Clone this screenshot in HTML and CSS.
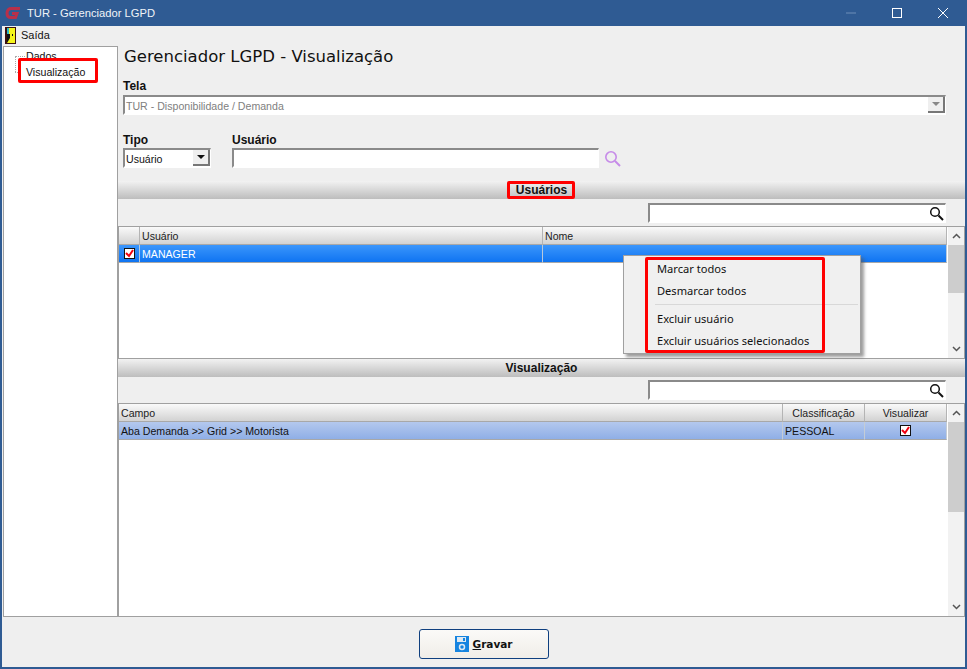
FILE: index.html
```html
<!DOCTYPE html>
<html lang="pt-BR">
<head>
<meta charset="utf-8">
<title>TUR - Gerenciador LGPD</title>
<link rel="stylesheet" href="styles.css">
</head>
<body>
<div class="window">
  <header class="titlebar">
    <svg class="app-logo" viewBox="0 0 16 16" width="16" height="16"><path d="M15 3.500H6.500Q2.500 3.500 2 8q0 4.500 4 4.500h4.500L12 8.500H7" fill="none" stroke="#b8304a" stroke-width="3"/></svg>
    <span class="title">TUR - Gerenciador LGPD</span>
    <div class="win-controls">
      <span class="ctl"><svg viewBox="0 0 12 12" width="12" height="12"><path d="M1 6h10" stroke="#6f8fb8" stroke-width="1"/></svg></span>
      <span class="ctl"><svg viewBox="0 0 12 12" width="12" height="12"><rect x="1.500" y="1.500" width="9" height="9" fill="none" stroke="#fff"/></svg></span>
      <span class="ctl"><svg viewBox="0 0 12 12" width="12" height="12"><path d="M1 1l10 10M11 1L1 11" stroke="#fff" stroke-width="1"/></svg></span>
    </div>
  </header>
  <nav class="menubar">
    <svg class="door" viewBox="0 0 11 17" width="11" height="17"><rect width="11" height="17" fill="#3a1010"/><rect x="2" y="1" width="8" height="15" fill="#f5f51a"/><path d="M2 7h3v4l-3 5z" fill="#111"/><rect x="2" y="1" width="2" height="6" fill="#29b6c9"/><rect x="7" y="7" width="1" height="2" fill="#111"/></svg>
    <span>Saída</span>
  </nav>
  <div class="content">
    <aside class="tree">
      <div class="tree-item first">Dados</div>
      <div class="mark mark-tree"></div>
      <div class="tree-item second">Visualização</div>
    </aside>
    <main class="main">
      <h1 class="heading">Gerenciador LGPD - Visualização</h1>
      <div class="form">
        <label class="lbl tela-lbl">Tela</label>
        <div class="field tela-field">
          <span class="val disabled">TUR - Disponibilidade / Demanda</span>
          <span class="drop off"><i></i></span>
        </div>
        <div class="filter-row">
          <div class="tipo">
            <label class="lbl">Tipo</label>
            <div class="field">
              <span class="val">Usuário</span>
              <span class="drop"><i></i></span>
            </div>
          </div>
          <div class="usuario">
            <label class="lbl">Usuário</label>
            <div class="usuario-line">
              <div class="field usuario-field"></div>
              <svg class="find" viewBox="0 0 17 17" width="17" height="17"><circle cx="7" cy="7" r="5.200" fill="none" stroke="#c68be8" stroke-width="1.600"/><path d="M11 11l5 5" stroke="#c68be8" stroke-width="2"/></svg>
            </div>
          </div>
        </div>
      </div>
      <div class="band"><span class="band-text marked">Usuários</span></div>
      <div class="search-row">
        <div class="field search">
          <svg viewBox="0 0 15 15" width="15" height="15"><circle cx="6" cy="6" r="4.300" fill="none" stroke="#111" stroke-width="1.500"/><path d="M9.500 9.500l4.500 4.500" stroke="#111" stroke-width="2"/></svg>
        </div>
      </div>
      <section class="grid grid-users">
        <div class="grid-body">
          <div class="row head">
            <span class="cell c-check"></span>
            <span class="cell c-user">Usuário</span>
            <span class="cell c-fill">Nome</span>
          </div>
          <div class="row selected">
            <span class="cell c-check"><span class="check"><svg viewBox="0 0 9 9" width="9" height="9"><path d="M1 4l3 3 4-6" fill="none" stroke="#f00010" stroke-width="2"/></svg></span></span>
            <span class="cell c-user">MANAGER</span>
            <span class="cell c-fill"></span>
          </div>
        </div>
        <div class="scrollbar">
          <span class="arrow"><svg viewBox="0 0 9 6" width="9" height="6"><path d="M1 5l3.500-3.500L8 5" fill="none" stroke="#555" stroke-width="1.500"/></svg></span>
          <span class="thumb thumb-users"></span>
          <span class="arrow end"><svg viewBox="0 0 9 6" width="9" height="6"><path d="M1 1l3.500 3.500L8 1" fill="none" stroke="#555" stroke-width="1.500"/></svg></span>
        </div>
      </section>
      <div class="band"><span class="band-text">Visualização</span></div>
      <div class="search-row second-search">
        <div class="field search">
          <svg viewBox="0 0 15 15" width="15" height="15"><circle cx="6" cy="6" r="4.300" fill="none" stroke="#111" stroke-width="1.500"/><path d="M9.500 9.500l4.500 4.500" stroke="#111" stroke-width="2"/></svg>
        </div>
      </div>
      <section class="grid grid-view">
        <div class="grid-body">
          <div class="row head">
            <span class="cell c-fill">Campo</span>
            <span class="cell c-class center">Classificação</span>
            <span class="cell c-vis center">Visualizar</span>
          </div>
          <div class="row soft">
            <span class="cell c-fill">Aba Demanda &gt;&gt; Grid &gt;&gt; Motorista</span>
            <span class="cell c-class">PESSOAL</span>
            <span class="cell c-vis center"><span class="check"><svg viewBox="0 0 9 9" width="9" height="9"><path d="M1 4l3 3 4-6" fill="none" stroke="#f00010" stroke-width="2"/></svg></span></span>
          </div>
        </div>
        <div class="scrollbar">
          <span class="arrow"><svg viewBox="0 0 9 6" width="9" height="6"><path d="M1 5l3.500-3.500L8 5" fill="none" stroke="#555" stroke-width="1.500"/></svg></span>
          <span class="thumb thumb-view"></span>
          <span class="arrow end"><svg viewBox="0 0 9 6" width="9" height="6"><path d="M1 1l3.500 3.500L8 1" fill="none" stroke="#555" stroke-width="1.500"/></svg></span>
        </div>
      </section>
    </main>
    <div class="context-menu">
      <div class="menu-item">Marcar todos</div>
      <div class="menu-item">Desmarcar todos</div>
      <div class="menu-sep"></div>
      <div class="menu-item">Excluir usuário</div>
      <div class="menu-item">Excluir usuários selecionados</div>
      <div class="mark mark-menu"></div>
    </div>
  </div>
  <footer class="footer">
    <button class="save" type="button">
      <svg viewBox="0 0 14 16" width="14" height="16"><rect width="14" height="16" fill="#1684e0"/><rect x="2" y="1" width="9" height="5" fill="#dfe9f2"/><rect x="8" y="2" width="2" height="3" fill="#1684e0"/><circle cx="7" cy="11" r="2.500" fill="none" stroke="#dfe9f2" stroke-width="1.500"/></svg>
      <span><u>G</u>ravar</span>
    </button>
  </footer>
</div>
</body>
</html>
```
FILE: styles.css
```css
* { box-sizing: border-box; }
html, body { margin: 0; padding: 0; }
body {
  width: 967px;
  height: 669px;
  overflow: hidden;
  font-family: "Liberation Sans", Arial, sans-serif;
  font-size: 10.600px;
  color: #111;
}
.window {
  width: 967px;
  height: 669px;
  display: flex;
  flex-direction: column;
  background: #efefef;
  border: 2px solid #2f5b93;
  border-top: 0;
}
.titlebar {
  height: 26px;
  margin: 0 -2px;
  flex: none;
  display: flex;
  align-items: center;
  padding-left: 5px;
  background: #2f5b93;
  color: #f0f4f8;
  font-size: 11.200px;
}
.app-logo { margin-right: 6px; flex: none; }
.title { flex: 1; }
.win-controls { display: flex; margin-right: 1px; }
.ctl {
  width: 46px;
  height: 26px;
  display: flex;
  align-items: center;
  justify-content: center;
}
.menubar {
  height: 20px;
  flex: none;
  display: flex;
  align-items: center;
  gap: 5px;
  padding: 0 0 2px 3px;
  font-size: 11px;
}
.content {
  flex: 1;
  min-height: 0;
  display: flex;
  position: relative;
}
.tree {
  width: 115px;
  margin-left: 1px;
  flex: none;
  background: #fff;
  border: 1px solid #a0a0a0;
  position: relative;
  padding: 1px 0 0 22px;
  overflow: hidden;
}
.tree-item { height: 16px; line-height: 16px; position: relative; white-space: nowrap; }
.tree-item::before {
  content: "";
  position: absolute;
  left: -11px;
  top: 8px;
  width: 10px;
  border-top: 1px dotted #aaa;
}
.tree-item.first::after {
  content: "";
  position: absolute;
  left: -11px;
  top: 8px;
  height: 16px;
  border-left: 1px dotted #aaa;
}
.tree-item.second { z-index: 1; }
.tree-item.second::before { width: 3px; }
.mark { position: absolute; border: 3px solid #f00; border-radius: 2px; pointer-events: none; }
.mark-tree { left: 14px; top: 11px; width: 80px; height: 25px; background: #fff; }
.main {
  flex: 1;
  min-width: 0;
  display: flex;
  flex-direction: column;
}
.heading {
  margin: 0;
  height: 21px;
  padding: 1px 0 0 6px;
  font-family: "DejaVu Sans", sans-serif;
  font-weight: 400;
  font-size: 16.500px;
  line-height: 20px;
  color: #111;
}
.form { padding: 11px 19px 0 5px; height: 115px; }
.lbl { display: block; font-weight: 700; height: 16px; line-height: 16px; font-size: 12px; }
.tela-lbl { margin-bottom: 1px; }
.field {
  height: 20px;
  background: #fff;
  border: 2px solid #8a8a8a;
  border-right: 1px solid #fff;
  border-bottom-color: #fff;
  display: flex;
  align-items: center;
  position: relative;
}
.val { flex: 1; padding: 1px 0 0 1px; white-space: nowrap; }
.val.disabled { color: #808080; }
.drop {
  width: 17px;
  height: 16px;
  flex: none;
  background: #efefef;
  border-right: 2px solid #777;
  border-bottom: 2px solid #777;
  display: flex;
  align-items: center;
  justify-content: center;
}
.drop i {
  width: 0;
  height: 0;
  border-left: 4px solid transparent;
  border-right: 4px solid transparent;
  border-top: 4px solid #111;
}
.drop.off i { border-top-color: #888; }
.filter-row { display: flex; gap: 21px; margin-top: 17px; }
.tipo { width: 88px; flex: none; }
.usuario { flex: 1; }
.usuario-line { display: flex; align-items: center; gap: 5px; }
.usuario-field { width: 367px; }
.find { flex: none; }
.band {
  height: 18px;
  flex: none;
  background: linear-gradient(#f2f2f2, #bdbdbd);
  display: flex;
  align-items: center;
  justify-content: center;
  font-weight: 700;
  font-size: 12px;
}
.band-text { position: relative; }
.band-text.marked::after {
  content: "";
  position: absolute;
  left: -9px;
  right: -8px;
  top: -2px;
  bottom: -2px;
  border: 3px solid #f00;
  border-radius: 2px;
}
.search-row {
  height: 27px;
  flex: none;
  display: flex;
  justify-content: flex-end;
  padding: 4px 19px 3px 0;
}
.second-search { height: 26px; padding: 3px 19px 3px 0; }
.search { width: 298px; justify-content: flex-end; padding-right: 1px; }
.grid {
  display: flex;
  background: #fff;
  border: 1px solid #a0a0a0;
  flex: none;
}
.grid-users { height: 133px; }
.grid-view { height: 214px; }
.grid-body { flex: 1; min-width: 0; }
.row { height: 18px; display: flex; }
.cell {
  display: flex;
  align-items: center;
  padding-left: 2px;
  border-right: 1px solid #b4b4b4;
  border-bottom: 1px solid #a8a8a8;
  white-space: nowrap;
  overflow: hidden;
}
.head .cell {
  background: linear-gradient(#fafafa, #d2d2d2);
  color: #222;
}
.selected .cell {
  background: linear-gradient(#3b96fb, #0f74f2);
  color: #fff;
  border-right-color: #b7c9dc;
}
.soft .cell {
  background: linear-gradient(#b4c8ee, #8fafe6);
  color: #111;
  border-right-color: #c4ccd6;
}
.c-check { width: 21px; justify-content: center; padding-left: 0; }
.c-user { width: 403px; }
.c-fill { flex: 1; min-width: 0; }
.c-class { width: 82px; }
.c-vis { width: 82px; }
.center { justify-content: center; padding-left: 0; }
.check {
  width: 11px;
  height: 11px;
  background: #fff;
  border: 1px solid #111;
  display: flex;
  align-items: center;
  justify-content: center;
}
.scrollbar {
  width: 17px;
  flex: none;
  background: #f2f2f2;
  display: flex;
  flex-direction: column;
  border-left: 1px solid #fff;
}
.arrow { height: 18px; display: flex; align-items: center; justify-content: center; flex: none; }
.arrow.end { margin-top: auto; }
.thumb { background: #cdcdcd; flex: none; }
.thumb-users { height: 48px; }
.thumb-view { height: 90px; }
.context-menu {
  position: absolute;
  left: 621px;
  top: 209px;
  width: 238px;
  height: 99px;
  background: #f0f0f0;
  border: 1px solid #a0a0a0;
  box-shadow: 3px 3px 3px rgba(90, 90, 90, 0.6);
  padding: 2px 0;
  z-index: 5;
  font-family: "Noto Sans", sans-serif;
  font-size: 11.100px;
}
.menu-item { height: 22px; line-height: 22px; padding-left: 33px; white-space: nowrap; }
.menu-sep { height: 4px; margin: 2px 2px 0 31px; border-top: 1px solid #d8d8d8; }
.mark-menu { left: 21px; top: 1px; width: 180px; height: 96px; }
.footer {
  height: 50px;
  flex: none;
  display: flex;
  align-items: flex-start;
  justify-content: center;
  padding: 12px 0 0 0;
}
.save {
  width: 130px;
  height: 30px;
  display: flex;
  align-items: center;
  justify-content: center;
  gap: 4px;
  background: linear-gradient(#fbfaf8, #f0ede8);
  border: 1px solid #0f3f7f;
  border-radius: 3px;
  font-family: "DejaVu Sans", sans-serif;
  font-weight: 700;
  font-size: 10.500px;
  color: #111;
  padding: 0;
}
```
